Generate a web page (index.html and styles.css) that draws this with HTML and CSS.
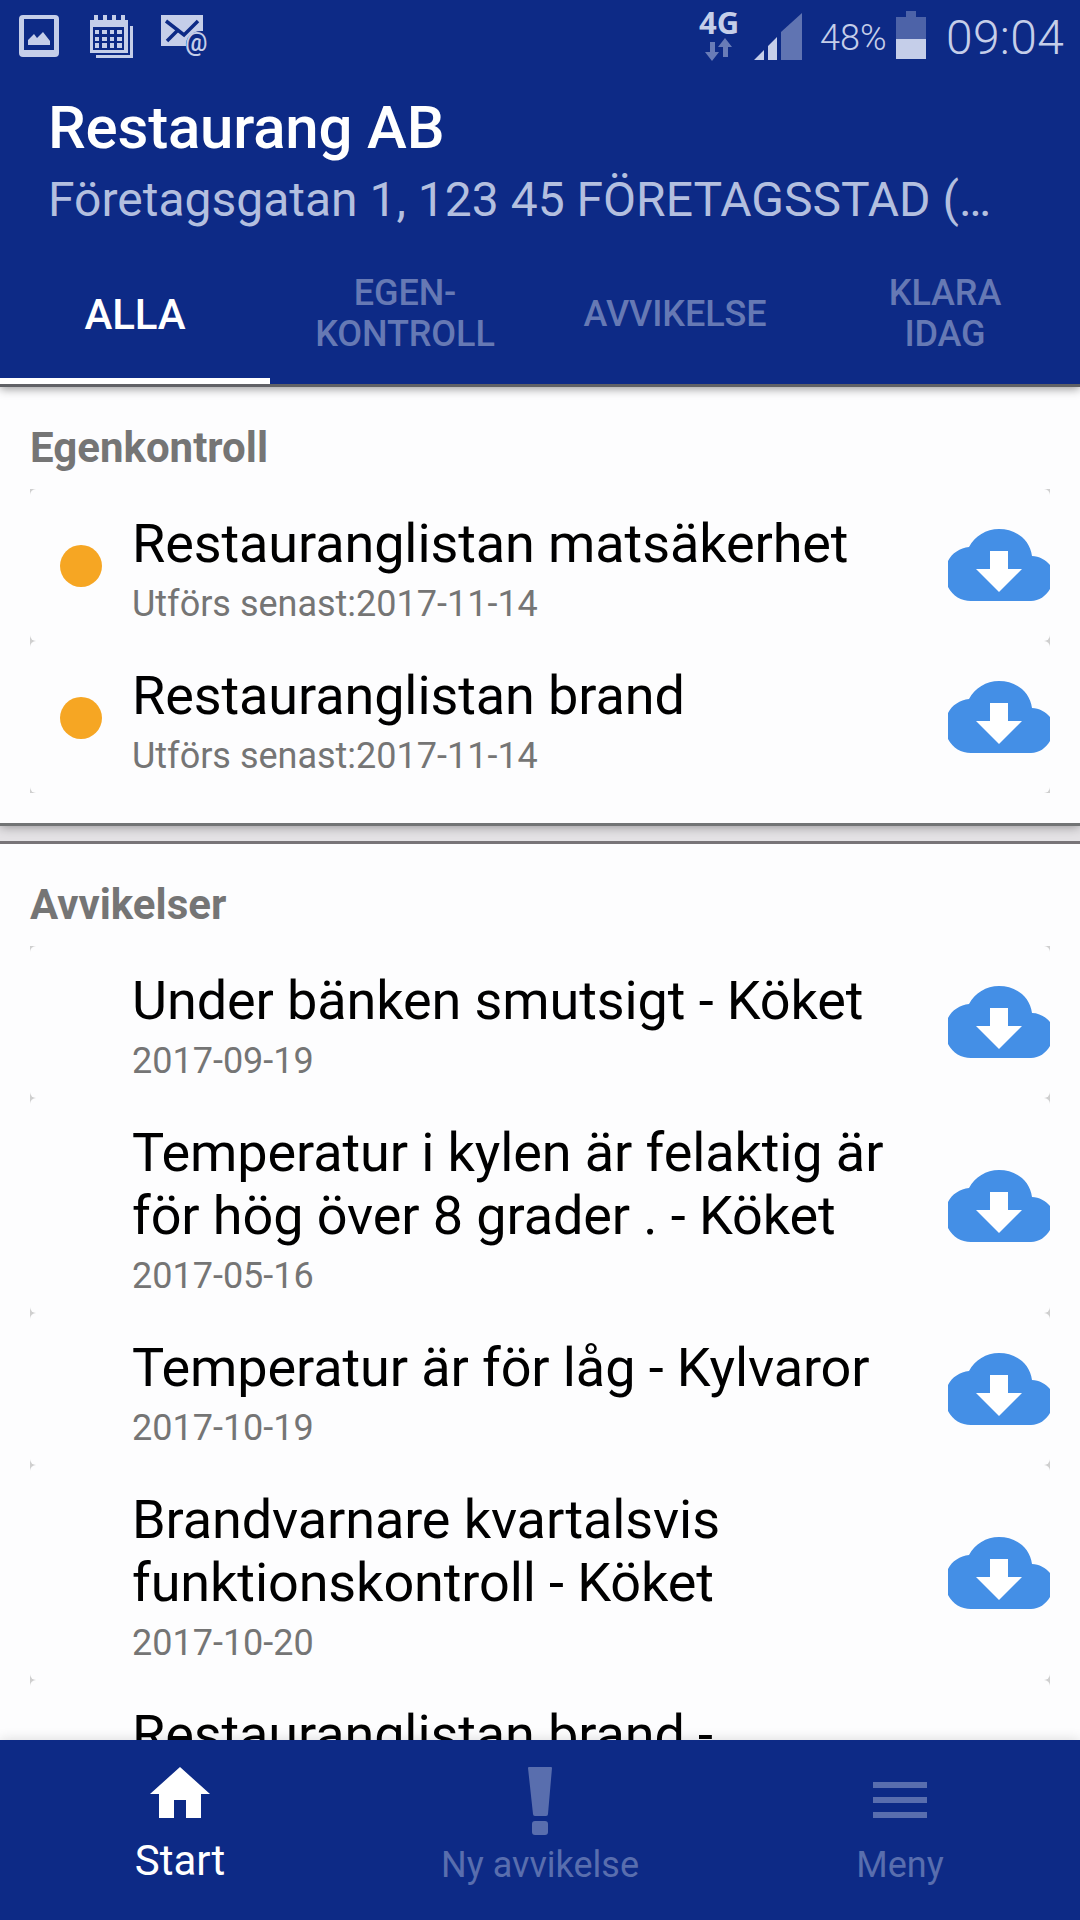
FILE: index.html
```html
<!DOCTYPE html>
<html lang="sv">
<head>
  <meta charset="UTF-8" />
  <meta name="viewport" content="width=device-width, initial-scale=1.0"/>
  <title>Restaurang AB</title>
  <link rel="stylesheet" href="styles.css">
</head>
<body>
  <svg class="defs" width="0" height="0">
    <symbol id="cloud" viewBox="0 0 102 72">
      <path fill="#448fe6" d="M21 18C27 7 38 0 51 0c17 0 31 11 33 27 7 0 14 4 18 9v24c-4 7-11 12-19 12H23C13 72 5 67 0 58V32c4-8 12-13 21-14z"/>
      <path fill="#fff" d="M42 22h18v18h14L51 63 28 40h14z"/>
    </symbol>
  </svg>

  <div class="screen">
    <header class="header">
      <div class="status">
        <svg class="st-image" width="40" height="42" viewBox="0 0 40 42">
          <path fill-rule="evenodd" d="M4 0h32a4 4 0 0 1 4 4v34a4 4 0 0 1-4 4H4a4 4 0 0 1-4-4V4a4 4 0 0 1 4-4zM5 4v31h30V4z"/>
          <path d="M9 30v-5l6-6 3 4 6-6 7 9v4z"/>
        </svg>
        <svg class="st-calendar" width="43" height="43" viewBox="0 0 43 43">
          <path fill-rule="evenodd" d="M0 5h4V0h4v5h5V0h4v5h5V0h4v5h5V0h4v5h3v33H0zM3 12v23h31V12z"/>
          <path d="M5 15h4v4H5zM12 15h5v4h-5zM20 15h4v4h-4zM27 15h5v4h-5zM5 22h4v4H5zM12 22h5v4h-5zM20 22h4v4h-4zM27 22h5v4h-5zM5 28h4v5H5zM12 28h5v5h-5zM20 28h4v5h-4zM27 28h5v5h-5z"/>
          <path d="M40 11h3v32H6v-3h34z"/>
        </svg>
        <svg class="st-mail" width="47" height="42" viewBox="0 0 47 42">
          <path d="M0 0h42v16c-10-1-18 6-17 15H0z"/>
          <path class="mail-lines" d="M5 6l18 14L37 6M6 26l10-10"/>
          <text x="24" y="36">@</text>
        </svg>
        <div class="network">
          <span>4G</span>
          <svg width="28" height="24" viewBox="0 0 28 24"><path d="M5 4h5v10h4L7 23 0 14h5zM18 19h5V9h4L20 0l-7 9h5z"/></svg>
        </div>
        <svg class="st-signal" width="48" height="47" viewBox="0 0 48 47">
          <path d="M0 47l10-10v10zM14 33l9-9v23h-9z"/>
          <path class="dim" d="M27 19L48 0v47H27z"/>
        </svg>
        <span class="percent">48%</span>
        <svg class="st-battery" width="30" height="48" viewBox="0 0 30 48">
          <path class="dim-battery" d="M10 0h10v6h10v22H0V6h10z"/>
          <path d="M0 28h30v20H0z"/>
        </svg>
        <span class="clock">09:04</span>
      </div>

      <h1>Restaurang AB</h1>
      <p class="address">Företagsgatan 1, 123 45 FÖRETAGSSTAD (…</p>

      <nav class="tabs">
        <a class="tab active">ALLA</a>
        <a class="tab">EGEN-<br>KONTROLL</a>
        <a class="tab">AVVIKELSE</a>
        <a class="tab">KLARA<br>IDAG</a>
      </nav>
    </header>

    <main class="content">
      <section class="section first">
        <h2>Egenkontroll</h2>
        <div class="row"><div class="card">
          <span class="dot orange"></span>
          <div class="text">
            <h3>Restauranglistan matsäkerhet</h3>
            <p>Utförs senast:2017-11-14</p>
          </div>
          <svg class="cloud"><use href="#cloud"/></svg>
        </div></div>
        <div class="row"><div class="card">
          <span class="dot orange"></span>
          <div class="text">
            <h3>Restauranglistan brand</h3>
            <p>Utförs senast:2017-11-14</p>
          </div>
          <svg class="cloud"><use href="#cloud"/></svg>
        </div></div>
      </section>

      <section class="section">
        <h2>Avvikelser</h2>
        <div class="row"><div class="card">
          <span class="dot"></span>
          <div class="text">
            <h3>Under bänken smutsigt - Köket</h3>
            <p>2017-09-19</p>
          </div>
          <svg class="cloud"><use href="#cloud"/></svg>
        </div></div>
        <div class="row"><div class="card">
          <span class="dot"></span>
          <div class="text">
            <h3>Temperatur i kylen är felaktig är<br>för hög över 8 grader . - Köket</h3>
            <p>2017-05-16</p>
          </div>
          <svg class="cloud"><use href="#cloud"/></svg>
        </div></div>
        <div class="row"><div class="card">
          <span class="dot"></span>
          <div class="text">
            <h3>Temperatur är för låg - Kylvaror</h3>
            <p>2017-10-19</p>
          </div>
          <svg class="cloud"><use href="#cloud"/></svg>
        </div></div>
        <div class="row"><div class="card">
          <span class="dot"></span>
          <div class="text">
            <h3>Brandvarnare kvartalsvis<br>funktionskontroll - Köket</h3>
            <p>2017-10-20</p>
          </div>
          <svg class="cloud"><use href="#cloud"/></svg>
        </div></div>
        <div class="row"><div class="card">
          <span class="dot"></span>
          <div class="text">
            <h3>Restauranglistan brand -</h3>
          </div>
        </div></div>
      </section>
    </main>

    <nav class="bottom">
      <a class="item active">
        <svg width="60" height="51" viewBox="0 0 60 51"><path d="M30 0l30 27h-9v24H36V33H24v18H9V27H0z"/></svg>
        <span>Start</span>
      </a>
      <a class="item">
        <svg width="24" height="68" viewBox="0 0 24 68">
          <path d="M1 0h22a1 1 0 0 1 1 1l-4 46a2 2 0 0 1-2 2H7a2 2 0 0 1-2-2L0 1a1 1 0 0 1 1-1z"/>
          <rect x="4" y="54" width="16" height="14" rx="3"/>
        </svg>
        <span>Ny avvikelse</span>
      </a>
      <a class="item">
        <svg class="menu" width="54" height="36" viewBox="0 0 54 36"><path d="M0 0h54v6H0zM0 15h54v6H0zM0 30h54v6H0z"/></svg>
        <span>Meny</span>
      </a>
    </nav>
  </div>
</body>
</html>
```
FILE: styles.css
```css
* { box-sizing: border-box; margin: 0; padding: 0; }
body { font-family: Roboto, sans-serif; background: #fdfdfe; overflow: hidden; }
svg { display: block; flex: none; }
.defs { position: absolute; }
.screen { width: 1080px; height: 1920px; display: flex; flex-direction: column; overflow: hidden; }

/* header */
.header { flex: none; height: 387px; background: #0d2a86; color: #fff; border-bottom: 3px solid #606165; box-shadow: 0 2px 9px rgba(0,0,0,0.4); z-index: 1; }
.status { height: 72px; display: flex; align-items: flex-start; padding-left: 19px; color: #c5cee9; fill: #c5cee9; }
.st-image { margin-top: 15px; }
.st-calendar { margin: 15px 0 0 31px; }
.st-mail { margin: 15px 0 0 28px; overflow: visible; font: 500 25px Roboto, sans-serif; }
.mail-lines { fill: none; stroke: #0d2a86; stroke-width: 3.5; }
.network { width: 40px; margin: 7px 0 0 491px; display: flex; flex-direction: column; align-items: center; }
.network span { font: bold 31px/31px "Open Sans", sans-serif; }
.network svg { opacity: 0.5; }
.st-signal { margin: 13px 0 0 15px; }
.dim { opacity: 0.45; }
.dim-battery { opacity: 0.35; }
.percent { width: 75px; margin-top: 17px; padding-left: 18px; font-size: 36px; line-height: 42px; font-weight: 300; white-space: nowrap; }
.st-battery { margin: 11px 0 0 19px; }
.clock { margin: 9px 0 0 20px; font-size: 48px; line-height: 57px; font-weight: 300; letter-spacing: 0.3px; }
h1 { padding: 21px 48px 0; font-size: 60px; line-height: 70px; font-weight: 500; letter-spacing: -0.2px; }
.address { margin-top: 9px; padding: 0 48px; font-size: 48px; line-height: 56px; color: #b3bfdf; white-space: nowrap; }
.tabs { display: grid; grid-template-columns: repeat(4, 1fr); height: 140px; margin-top: 16px; }
.tab { display: flex; align-items: center; justify-content: center; text-align: center; font-size: 36px; line-height: 41px; font-weight: 500; letter-spacing: -0.1px; color: #6679b4; }
.tab.active { font-size: 42px; color: #fff; box-shadow: inset 0 -6px #fff; }

/* lists */
.content { flex: 1; min-height: 0; overflow: hidden; background: #e4e2e5; }
.section { background: #fdfdfe; padding: 0 30px 30px; }
.section.first { margin-bottom: 15px; border-bottom: 3px solid #727475; box-shadow: 0 1px 10px rgba(0,0,0,0.35); }
.section + .section { position: relative; border-top: 3px solid #787478; }
h2 { height: 102px; padding-top: 36px; font-size: 42px; line-height: 49px; font-weight: 700; color: #757575; }
.row { background: #cfcfcf; }
.card { display: flex; align-items: center; padding: 23px 0 16px 30px; background: #fdfdfe; border-radius: 6px; }
.dot { flex: none; width: 42px; height: 42px; margin: -6px 30px 0 0; border-radius: 50%; }
.dot.orange { background: #f6a623; }
.text { flex: 1; min-width: 0; white-space: nowrap; }
.text h3 { font-size: 54px; line-height: 63px; font-weight: 400; letter-spacing: -0.1px; color: #000; }
.text p { margin-top: 8px; font-size: 36px; line-height: 42px; color: #757575; }
.cloud { width: 102px; height: 72px; margin-top: -7px; }

/* bottom bar */
.bottom { flex: none; display: grid; grid-template-columns: repeat(3, 1fr); height: 180px; background: #0d2a86; z-index: 1; box-shadow: 0 0 12px rgba(0,0,0,0.15); }
.item { display: flex; flex-direction: column; align-items: center; justify-content: space-between; padding: 27px 0 34px; font-size: 36px; line-height: 42px; color: #596eae; fill: #596eae; }
.item.active { padding-bottom: 38px; font-size: 42px; color: #fff; fill: #fff; }
.menu { margin-top: 15px; }
```
